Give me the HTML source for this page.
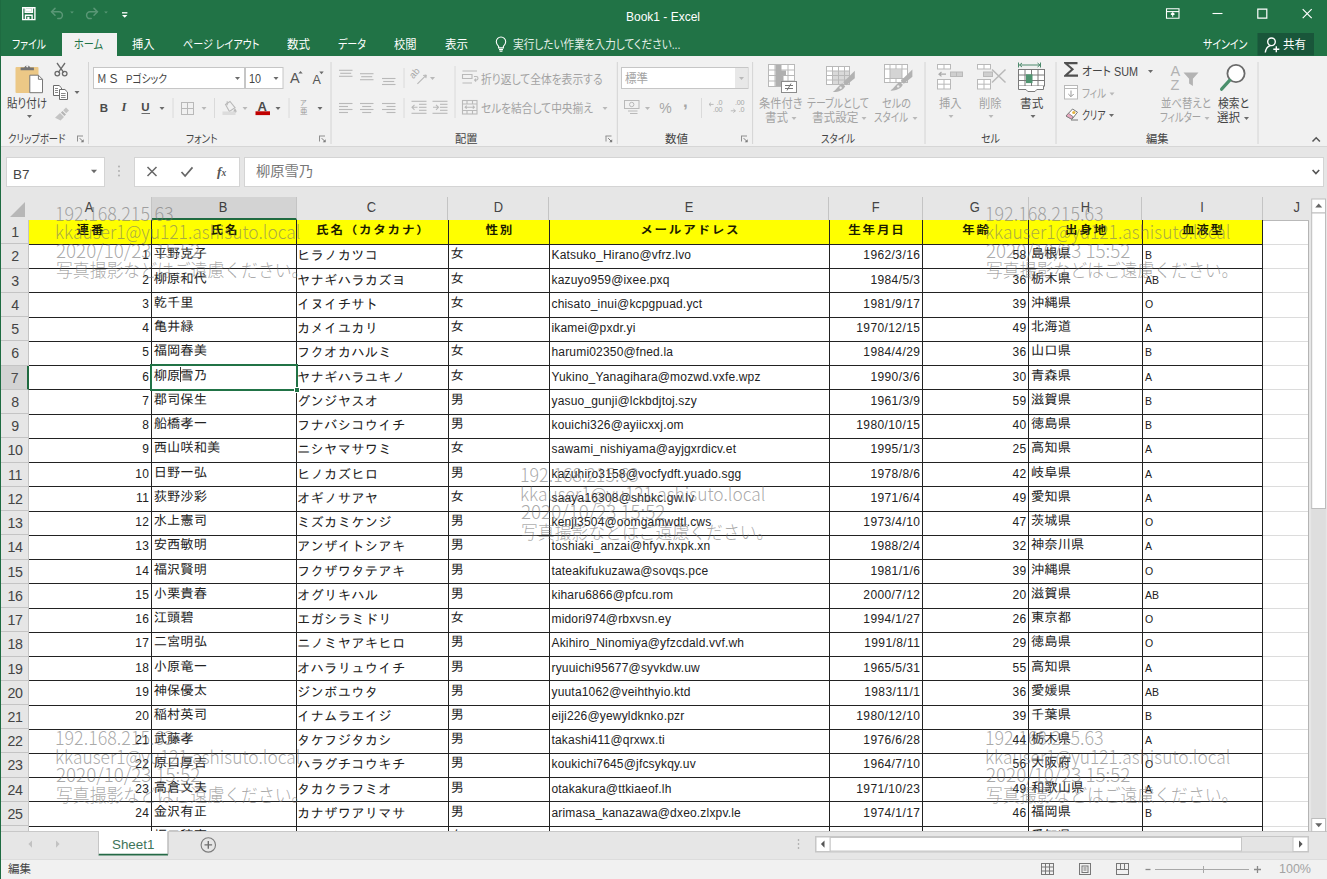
<!DOCTYPE html>
<html lang="ja">
<head>
<meta charset="utf-8">
<title>Book1 - Excel</title>
<style>
html,body{margin:0;padding:0;}
body{width:1327px;height:879px;overflow:hidden;position:relative;background:#e6e6e6;font-family:"Liberation Sans","Noto Sans CJK JP",sans-serif;font-size:12px;color:#444;}
div,span{box-sizing:border-box;}
.abs{position:absolute;}
#win{position:absolute;left:0;top:0;width:1327px;height:879px;overflow:hidden;background:#e6e6e6;}
#edge{position:absolute;left:0;top:0;width:1px;height:879px;background:#1e6b41;z-index:50;}
#title{position:absolute;left:0;top:0;width:1327px;height:56px;background:#217346;}
#ttl{position:absolute;left:563px;top:9px;width:200px;text-align:center;color:#fff;font-size:12px;line-height:16px;}
.tab{position:absolute;top:33px;height:23px;line-height:23px;color:#fff;font-size:12px;white-space:nowrap;}
#hometab{position:absolute;left:62px;top:33px;width:55px;height:24px;background:#f1f1f1;color:#217346;text-align:center;line-height:23px;font-size:12px;}
#ribbon{position:absolute;left:0;top:56px;width:1327px;height:91px;background:#f1f1f1;border-bottom:1px solid #d6d6d6;}
.gsep{position:absolute;top:63px;width:1px;height:79px;background:#d8d8d8;}
.glabel{position:absolute;top:129px;height:16px;line-height:16px;font-size:11.5px;color:#555;white-space:nowrap;}
.rt{position:absolute;font-size:11.5px;line-height:14px;white-space:nowrap;color:#444;font-feature-settings:"palt";transform-origin:0 50%;z-index:8;}
.dis{color:#a6a6a6;}
/* formula bar */
#namebox{position:absolute;left:6px;top:157px;width:99px;height:30px;background:#fff;border:1px solid #d4d4d4;}
#fxbox{position:absolute;left:134px;top:157px;width:105.5px;height:30px;background:#fff;border:1px solid #d4d4d4;}
#fbar{position:absolute;left:243.5px;top:157px;width:1080.5px;height:30px;background:#fff;border:1px solid #d4d4d4;}
/* grid */
#sheet{position:absolute;left:28.5px;top:220.2px;width:1280px;height:611.4px;background:#fff;border-right:1px solid #b4b4b4;}
.ch{position:absolute;top:196.5px;height:23.7px;line-height:20.5px;text-align:center;font-size:15px;color:#444;border-right:1px solid #c4c4c4;}
.ch.sel{background:#d3d3d3;color:#3e3e3e;border-bottom:2px solid #1f6a40;}
.ch span{display:inline-block;transform:scaleX(0.86);}
.rh{position:absolute;left:1px;width:27.5px;padding-left:1.5px;height:24.24px;line-height:25px;text-align:center;font-size:14.2px;letter-spacing:-0.4px;color:#444;border-bottom:1px solid #c4c4c4;background:#e6e6e6;border-right:1px solid #c4c4c4;}
.rh.sel{background:#d3d3d3;color:#4a4a4a;border-right:2px solid #1f6a40;}
.hd{position:absolute;height:24.24px;line-height:21.5px;background:#ffff00;text-align:center;font-family:"Liberation Sans","Noto Sans CJK JP",sans-serif;font-weight:bold;font-size:12.5px;color:#1c1c00;white-space:nowrap;letter-spacing:1.8px;padding-left:1.8px;}
.hd span{display:inline-block;transform:scaleY(0.88);}
.c{position:absolute;height:24.24px;line-height:19.8px;white-space:nowrap;overflow:hidden;color:#222;}
.c.j{font-family:"IPAGothic","Noto Sans CJK JP",sans-serif;font-size:13.33px;padding-left:2.2px;}
.c.n,.c.d{text-align:right;padding-right:2.2px;font-size:12px;letter-spacing:0.4px;line-height:22.2px;}
.c.e{padding-left:2.2px;font-size:12px;letter-spacing:0.18px;line-height:22.8px;}
.c.b{padding-left:2.6px;font-size:10.5px;line-height:22.8px;}
.c.k{font-family:"IPAGothic","Noto Sans CJK JP",sans-serif;font-size:13.33px;padding-left:0.4px;letter-spacing:0.25px;line-height:22.2px;}
.hl{position:absolute;left:28.5px;width:1234px;height:1px;background:#222;}
.vl{position:absolute;top:220.2px;width:1px;height:611.3px;background:#222;}
.gl{position:absolute;height:1px;background:#dcdcdc;}
#hdline{position:absolute;left:1px;top:219.5px;width:1307.5px;height:1px;background:#b9b9b9;}
#clipgrid{position:absolute;left:0;top:0;width:1327px;height:831.3px;overflow:hidden;}
.selbox{position:absolute;border:2px solid #217346;z-index:20;}
.fillh{position:absolute;width:6px;height:6px;background:#217346;border:1px solid #fff;z-index:21;}
.caret{position:absolute;width:1px;height:15px;background:#333;z-index:21;}
#corner{position:absolute;left:9.5px;top:201.5px;width:0;height:0;border-left:15px solid transparent;border-bottom:15px solid #b7b7b7;}
/* bottom */
#tabbar{position:absolute;left:0;top:831.3px;width:1327px;height:28px;background:#e6e6e6;border-top:1px solid #c8c8c8;}
#status{position:absolute;left:0;top:859px;width:1327px;height:20px;background:#f1f1f1;border-top:1px solid #dcdcdc;}
.wm{position:absolute;font-family:"Noto Sans CJK JP",sans-serif;font-weight:300;font-size:18.6px;line-height:20px;color:rgba(112,112,112,0.6);white-space:nowrap;z-index:40;transform-origin:0 0;}
</style>
</head>
<body>
<div id="win">
<div id="title"></div>
<div id="ttl">Book1 - Excel</div>
<div id="hometab"></div>
<div class="rt" style="left:12px;top:37px;font-size:12px;line-height:16px;transform:scaleX(0.818);color:#fff;">ファイル</div>
<div class="rt" style="left:74px;top:37px;font-size:12px;line-height:16px;transform:scaleX(0.844);color:#217346;">ホーム</div>
<div class="rt" style="left:132px;top:37px;font-size:12px;line-height:16px;transform:scaleX(0.937);color:#fff;">挿入</div>
<div class="rt" style="left:183px;top:37px;font-size:12px;line-height:16px;transform:scaleX(0.838);color:#fff;">ページ レイアウト</div>
<div class="rt" style="left:287px;top:37px;font-size:12px;line-height:16px;transform:scaleX(0.958);color:#fff;">数式</div>
<div class="rt" style="left:338px;top:37px;font-size:12px;line-height:16px;transform:scaleX(0.835);color:#fff;">データ</div>
<div class="rt" style="left:394px;top:37px;font-size:12px;line-height:16px;transform:scaleX(0.937);color:#fff;">校閲</div>
<div class="rt" style="left:445px;top:37px;font-size:12px;line-height:16px;transform:scaleX(0.958);color:#fff;">表示</div>
<div class="rt" style="left:512.5px;top:37px;font-size:12px;line-height:16px;transform:scaleX(0.887);color:#e3efe8;">実行したい作業を入力してください...</div>
<div class="rt" style="left:1203px;top:37px;font-size:12px;line-height:16px;transform:scaleX(0.827);color:#fff;">サインイン</div>
<div class="rt" style="left:1283px;top:37px;font-size:12px;line-height:16px;transform:scaleX(0.958);color:#fff;">共有</div>
<div id="ribbon"></div>
<svg class="abs" style="left:0;top:0;z-index:5" width="1327" height="195" viewBox="0 0 1327 195" fill="none">
<g stroke="#fff" stroke-width="1.4" fill="none"><path d="M22.700 7.800h12.200v11.800h-12.200z"/><path d="M25.200 8v4.200h7.200v-4.200" /><path d="M25.500 19.400v-4.200h6.600v4.200"/></g><rect x="25.900" y="8.400" width="5.800" height="3.300" fill="#fff"/><rect x="27.300" y="16.800" width="2.200" height="2.600" fill="#fff"/>
<g stroke="#5a9776" stroke-width="1.500" fill="none" stroke-linecap="round"><path d="M52 11.800h7a3.400 3.400 0 0 1 0 6.800h-1.200"/><path d="M55 8.400l-3.400 3.400 3.400 3.400"/></g>
<g stroke="#5a9776" stroke-width="1.500" fill="none" stroke-linecap="round"><path d="M97 11.800h-7a3.400 3.400 0 0 0 0 6.800h1.200"/><path d="M94 8.400l3.400 3.400-3.400 3.400"/></g>
<path d="M70.2 11.4h3.6l-1.8 2.2z" fill="#5a9776"/>
<path d="M104.2 11.4h3.6l-1.8 2.2z" fill="#5a9776"/>
<path d="M122 12.800h5.400" stroke="#fff" stroke-width="1.300"/><path d="M122 15l5.400 0l-2.700 2.800z" fill="#fff"/>
<g transform="translate(-0.5 -0.7)"><g stroke="#fff" stroke-width="1.1" fill="none"><path d="M1167 9.5h12.5v9.5h-12.5z"/><path d="M1167 12.3h12.5"/><path d="M1173.2 17.5v-3.8M1171.4 15.2l1.8-1.8 1.8 1.8"/></g>
<path d="M1213 14.2h10" stroke="#fff" stroke-width="1.1"/>
<path d="M1258.3 9.8h9v9h-9z" stroke="#fff" stroke-width="1.2"/>
<path d="M1303.2 9.800l9 9M1312.200 9.800l-9 9" stroke="#fff" stroke-width="1.200"/></g>
<rect x="1257.5" y="33" width="56.5" height="22.5" fill="#19563a"/>
<g stroke="#fff" stroke-width="1.4" fill="none"><circle cx="1271.5" cy="41.8" r="3.8"/><path d="M1265.3 52.5c0.6-4.2 2.8-6.4 5.2-6.9"/><path d="M1276.3 46.2v6M1273.3 49.2h6"/></g>
<g stroke="#fff" stroke-width="1.1" fill="none"><path d="M498.6 46.3c-1.4-1.4-2.3-2.6-2.3-4.6a4.7 4.7 0 0 1 9.4 0c0 2-0.9 3.2-2.3 4.6v1.6h-4.8z"/><path d="M499 49.6h4M499.6 51.3h2.8"/></g>
<rect x="15.5" y="67" width="23" height="26" rx="1" fill="#ecc886"/>
<path d="M20.600 70.300h13.300v-2.800h-3.600a3.300 3.300 0 0 0-6.100 0h-3.600z" fill="#737373"/><circle cx="27.250" cy="66.300" r="1.100" fill="#f1f1f1"/>
<path d="M29.8 75.2h8.6l4.1 4.1v13.4h-12.7z" fill="#fff" stroke="#777" stroke-width="1"/><path d="M38.4 75.2v4.1h4.1" stroke="#777" stroke-width="1" fill="none"/>
<path d="M27.0 115.0h5l-2.5 3z" fill="#6b6b6b"/>
<g stroke="#6b6b6b" stroke-width="1.3" fill="none"><path d="M57 63l6.8 9.6M65 63l-6.8 9.6"/><circle cx="57.3" cy="73.6" r="2.3"/><circle cx="64.7" cy="73.6" r="2.3"/></g>
<g stroke="#6b6b6b" stroke-width="1" fill="#fff"><path d="M53.5 85.5h5.6l2.4 2.4v7.6h-8z"/><path d="M59.5 89.5h5.4l2.6 2.6v7.4h-8z"/></g><path d="M55 88.5h3M55 90.5h3M55 92.5h3M61 93.5h4.6M61 95.5h4.6M61 97.5h4.6" stroke="#6b6b6b" stroke-width="0.8"/>
<path d="M74.5 91.0h5l-2.5 3z" fill="#6b6b6b"/>
<g fill="#c4c4c4"><path d="M66 107.5l3 3-2.8 2.8-3-3z"/><path d="M62.5 111l3.5 3.5-1.6 1.6-3.5-3.5z" fill="#b5b5b5"/><path d="M60 113l4 4-3.4 3.4-5.6-2.6z"/></g>
<path d="M77.5 136v5.500M77.0 136h6" stroke="#8f8f8f" stroke-width="1" fill="none"/>
<path d="M83.7 139.2v3h-3z" fill="#7a7a7a"/><path d="M79.7 138.2l3 3" stroke="#7a7a7a" stroke-width="1"/>
<rect x="93.5" y="67.5" width="151" height="21" fill="#fff" stroke="#c6c6c6"/>
<rect x="245.5" y="67.5" width="37.5" height="21" fill="#fff" stroke="#c6c6c6"/>
<path d="M235.0 77.0h5l-2.5 3z" fill="#6b6b6b"/>
<path d="M273.5 77.0h5l-2.5 3z" fill="#6b6b6b"/>
<path d="M319.5 136v5.500M319.0 136h6" stroke="#8f8f8f" stroke-width="1" fill="none"/>
<path d="M325.7 139.2v3h-3z" fill="#7a7a7a"/><path d="M321.7 138.2l3 3" stroke="#7a7a7a" stroke-width="1"/>
<path d="M300.5 71l2.2 2.6h-4.4z" fill="#6b6b6b"/><path d="M321.5 74.2l2.2-2.6h-4.4z" fill="#6b6b6b"/>
<path d="M141.5 113.5h8.5" stroke="#6b6b6b" stroke-width="1"/>
<path d="M159.5 107.0h5l-2.5 3z" fill="#6b6b6b"/>
<g stroke="#b9b9b9" stroke-width="1" fill="none"><rect x="181.5" y="102.5" width="12" height="12"/><path d="M187.5 102.5v12M181.5 108.5h12"/></g>
<path d="M201.5 107.0h5l-2.5 3z" fill="#b9b9b9"/>
<g stroke="#b9b9b9" stroke-width="1.1" fill="none"><path d="M225.5 104.5l4.5-3 5 6.2-5.6 3.8z"/><path d="M227.2 101.2v4"/></g><path d="M235 108.2c1 1.4 1.5 2.2 1.5 3a1.5 1.5 0 0 1-3 0c0-0.8 0.5-1.6 1.5-3z" fill="#b9b9b9"/><rect x="222.5" y="111.5" width="13" height="3.5" fill="#dcdcdc"/>
<path d="M242.5 107.0h5l-2.5 3z" fill="#b9b9b9"/>
<rect x="255.5" y="111.3" width="14.5" height="3.8" fill="#c00000"/>
<path d="M275.5 107.0h5l-2.5 3z" fill="#6b6b6b"/>
<path d="M317.5 107.0h5l-2.5 3z" fill="#6b6b6b"/>
<path d="M173 98v20" stroke="#dadada" stroke-width="1"/>
<path d="M214.5 98v20" stroke="#dadada" stroke-width="1"/>
<path d="M289 98v20" stroke="#dadada" stroke-width="1"/>
<path d="M339 70.3h13.5" stroke="#b9b9b9" stroke-width="1.1"/>
<path d="M340.2 73.3h11" stroke="#b9b9b9" stroke-width="1.1"/>
<path d="M339 76.3h13.5" stroke="#b9b9b9" stroke-width="1.1"/>
<path d="M360 73.7h13.5" stroke="#b9b9b9" stroke-width="1.1"/>
<path d="M361.2 76.7h11" stroke="#b9b9b9" stroke-width="1.1"/>
<path d="M360 79.7h13.5" stroke="#b9b9b9" stroke-width="1.1"/>
<path d="M382 78.5h13.5" stroke="#b9b9b9" stroke-width="1.1"/>
<path d="M383.2 81.5h11" stroke="#b9b9b9" stroke-width="1.1"/>
<path d="M382 84.5h13.5" stroke="#b9b9b9" stroke-width="1.1"/>
<text x="0" y="0" transform="translate(413.2 79.2) rotate(-48)" font-family="Liberation Sans, sans-serif" font-size="9.5" fill="#a9a9a9">ab</text>
<path d="M417.4 83.9l8.6-8.6M426.3 75l-3.2 0.5M426.3 75l-0.500 3.200" stroke="#b9b9b9" stroke-width="1.2" fill="none"/>
<path d="M430.0 77.0h5l-2.5 3z" fill="#b9b9b9"/>
<path d="M339 103.5h13.5" stroke="#b9b9b9" stroke-width="1.1"/>
<path d="M339 106.5h9" stroke="#b9b9b9" stroke-width="1.1"/>
<path d="M339 109.5h13.5" stroke="#b9b9b9" stroke-width="1.1"/>
<path d="M339 112.5h9" stroke="#b9b9b9" stroke-width="1.1"/>
<path d="M360 103.5h13.5" stroke="#b9b9b9" stroke-width="1.1"/>
<path d="M362.2 106.5h9" stroke="#b9b9b9" stroke-width="1.1"/>
<path d="M360 109.5h13.5" stroke="#b9b9b9" stroke-width="1.1"/>
<path d="M362.2 112.5h9" stroke="#b9b9b9" stroke-width="1.1"/>
<path d="M382 103.5h13.5" stroke="#b9b9b9" stroke-width="1.1"/>
<path d="M386.5 106.5h9" stroke="#b9b9b9" stroke-width="1.1"/>
<path d="M382 109.5h13.5" stroke="#b9b9b9" stroke-width="1.1"/>
<path d="M386.5 112.5h9" stroke="#b9b9b9" stroke-width="1.1"/>
<path d="M411.5 101.3h15" stroke="#b9b9b9" stroke-width="1.1"/>
<path d="M419 104.3h7.5" stroke="#b9b9b9" stroke-width="1.1"/>
<path d="M419 107.3h7.5" stroke="#b9b9b9" stroke-width="1.1"/>
<path d="M419 110.3h7.5" stroke="#b9b9b9" stroke-width="1.1"/>
<path d="M411.5 113.3h15" stroke="#b9b9b9" stroke-width="1.1"/>
<path d="M412 107.300h5.500M414.500 104.800l-2.500 2.500 2.500 2.500" stroke="#b9b9b9" stroke-width="1.1"/>
<path d="M432.5 101.3h15" stroke="#b9b9b9" stroke-width="1.1"/>
<path d="M440 104.3h7.5" stroke="#b9b9b9" stroke-width="1.1"/>
<path d="M440 107.3h7.5" stroke="#b9b9b9" stroke-width="1.1"/>
<path d="M440 110.3h7.5" stroke="#b9b9b9" stroke-width="1.1"/>
<path d="M432.5 113.3h15" stroke="#b9b9b9" stroke-width="1.1"/>
<path d="M433 107.300h5.500M436 104.800l2.500 2.500-2.500 2.500" stroke="#b9b9b9" stroke-width="1.1"/>
<path d="M404 68v20M404 98v20" stroke="#dadada" stroke-width="1"/>
<path d="M455 66v52" stroke="#dadada" stroke-width="1"/>
<g stroke="#b9b9b9" stroke-width="1.1" fill="none"><path d="M462.5 71h14.5M462.5 74.5h9.5v4h-9.5zM462.5 83h9.5"/><path d="M474 76.5h2.2a1.8 1.8 0 0 1 0 3.6h-1.2M476 78.6l-1.4 1.5 1.4 1.5"/></g>
<g stroke="#b9b9b9" stroke-width="1.1" fill="none"><rect x="462.5" y="100.5" width="14.5" height="13.5"/><path d="M462.5 104h14.5M462.5 110.5h14.5M467 100.5v3.5M472.5 100.5v3.5M467 110.5v3.5M472.5 110.5v3.5"/><path d="M465 107.2h9.5M466.7 105.7l-1.6 1.5 1.6 1.5M472.8 105.7l1.6 1.5-1.6 1.5"/></g>
<path d="M602.5 107.0h5l-2.5 3z" fill="#b9b9b9"/>
<path d="M606 136v5.500M605.5 136h6" stroke="#8f8f8f" stroke-width="1" fill="none"/>
<path d="M612.2 139.2v3h-3z" fill="#7a7a7a"/><path d="M608.2 138.2l3 3" stroke="#7a7a7a" stroke-width="1"/>
<rect x="621.5" y="67.5" width="126.5" height="21" fill="#fff" stroke="#c6c6c6"/><rect x="735" y="68" width="12.5" height="20" fill="#e8e8e8"/>
<path d="M739.0 77.0h5l-2.5 3z" fill="#b9b9b9"/>
<g stroke="#b9b9b9" stroke-width="1" fill="none"><rect x="624.5" y="100.500" width="14.500" height="8"/><circle cx="631.700" cy="104.500" r="2.200"/><path d="M628 111h9.500M630 113.500h7.500"/></g>
<path d="M709 104.400h4.600M711 102.600l-2 1.800 2 1.800" stroke="#b9b9b9" stroke-width="1" fill="none"/><path d="M730.800 110.800h4.600M733.400 109l2 1.800-2 1.800" stroke="#b9b9b9" stroke-width="1" fill="none"/>
<path d="M645.0 107.0h5l-2.5 3z" fill="#b9b9b9"/>
<path d="M701.5 98v20" stroke="#dadada" stroke-width="1"/>
<path d="M741.5 136v5.500M741.0 136h6" stroke="#8f8f8f" stroke-width="1" fill="none"/>
<path d="M747.7 139.2v3h-3z" fill="#7a7a7a"/><path d="M743.7 138.2l3 3" stroke="#7a7a7a" stroke-width="1"/>
<g stroke="#b9b9b9" stroke-width="1" fill="#fff"><rect x="768.5" y="64.5" width="26" height="22"/><path d="M768.5 70h26M768.5 75.5h26M768.5 81h26M775 64.5v22M788 64.5v22"/></g><rect x="775.500" y="65" width="6" height="21" fill="#b0b0b0"/><rect x="781" y="70.500" width="5" height="5" fill="#b0b0b0"/><rect x="781" y="76" width="2.500" height="5" fill="#b0b0b0"/><rect x="781.5" y="81.5" width="15" height="11" fill="#fff" stroke="#8c8c8c"/><path d="M785 85.5h8M785 88.5h8M791 83.5l-4 7" stroke="#777" stroke-width="1"/>
<g stroke="#b9b9b9" stroke-width="1" fill="#fff"><rect x="826.5" y="66.5" width="23" height="18"/></g><rect x="833" y="71" width="16" height="13" fill="#d9d9d9"/><path d="M826.5 71h23M826.5 75.5h23M826.5 80h23M832.5 66.5v18M838.5 66.5v18M844.5 66.5v18" stroke="#b9b9b9" stroke-width="1"/><g fill="#b2b2b2"><path d="M854.8 70.800V78.200L846.200 85.200L843.200 82.200Z"/><path d="M842.200 83.200L845.200 86.200C843.500 90 838 92.300 832.800 92C836.500 89.500 838.500 85.500 842.200 83.200Z"/></g><circle cx="840.600" cy="87.800" r="1.200" fill="#ececec"/>
<g stroke="#b9b9b9" stroke-width="1" fill="#fff"><rect x="884.5" y="64.5" width="23" height="18"/></g><rect x="890" y="69.5" width="12" height="8.5" fill="#d4d4d4"/><path d="M884.5 69h23M884.5 78.5h23M890 64.5v18M902 64.5v18M896 64.5v4.5M896 78.5v4" stroke="#b9b9b9" stroke-width="1"/><g transform="translate(57.600 -1.400)"><g fill="#b2b2b2"><path d="M854.8 70.800V78.200L846.200 85.200L843.200 82.200Z"/><path d="M842.200 83.200L845.200 86.200C843.500 90 838 92.300 832.800 92C836.500 89.500 838.500 85.500 842.200 83.200Z"/></g><circle cx="840.600" cy="87.800" r="1.200" fill="#ececec"/></g>
<path d="M791.5 117.0h5l-2.5 3z" fill="#b9b9b9"/>
<path d="M861.5 117.0h5l-2.5 3z" fill="#b9b9b9"/>
<path d="M912.5 117.0h5l-2.5 3z" fill="#b9b9b9"/>
<g stroke="#b9b9b9" stroke-width="1" fill="#fff"><rect x="937.5" y="64.5" width="13" height="4.5"/><path d="M944 64.5v4.5"/><rect x="937.5" y="79.5" width="13" height="9.5"/><path d="M937.5 84.2h13M944 79.5v9.5"/><rect x="950.5" y="72" width="12" height="4.5" fill="#cfcfcf"/><path d="M956.5 72v4.5"/><path d="M939 74.2h7M941.5 72l-2.5 2.2 2.5 2.2" fill="none" stroke="#a9a9a9" stroke-width="1.2"/></g>
<path d="M948.5 115.0h5l-2.5 3z" fill="#b9b9b9"/>
<g stroke="#b9b9b9" stroke-width="1" fill="#fff"><rect x="977.5" y="64.5" width="13" height="4.5"/><path d="M984 64.5v4.5"/><rect x="977.5" y="79.5" width="13" height="9.5"/><path d="M977.5 84.2h13M984 79.5v9.5"/><rect x="983.5" y="72" width="9" height="4.5" fill="#cfcfcf"/><path d="M992 69.500l13.500 13M1005.500 69.500l-13.500 13" fill="none" stroke="#b9b9b9" stroke-width="1.500"/></g>
<path d="M988.5 115.0h5l-2.5 3z" fill="#b9b9b9"/>
<g stroke="#7a7a7a" stroke-width="1" fill="#fff"><rect x="1018.5" y="69.5" width="26" height="16.5"/><path d="M1018.5 75h26M1018.5 80.5h26M1025 69.5v16.5M1031.5 69.5v16.5M1038 69.5v16.5"/><path d="M1018.5 86v3.5h7.5l1.8 2h7.2l1.8-2h6.7v-3.5" fill="#fff"/></g><rect x="1026" y="74.300" width="6.500" height="8.800" fill="#4f9470"/><path d="M1018.5 62.5v5M1040.5 62.5v5M1019.5 65h20M1022 63l-2.5 2 2.5 2M1037.5 63l2.5 2-2.5 2" stroke="#4d8a6c" stroke-width="1" fill="none"/>
<path d="M1030.5 115.0h5l-2.5 3z" fill="#6b6b6b"/>
<path d="M1077.500 62h-13.500v1.300l7 6-7 6.200v1.300h14v-2.300h-9.800l5.900-5.300-5.900-5h9.300z" fill="#505050"/>
<path d="M1148.0 70.0h5l-2.5 3z" fill="#6b6b6b"/>
<g stroke="#b9b9b9" stroke-width="1" fill="#fff"><rect x="1064.5" y="85.5" width="13" height="13.5"/><path d="M1064.5 88.5h13"/><path d="M1071 90.5v6M1068.3 94l2.7 2.7 2.7-2.7" fill="none" stroke="#999"/></g>
<path d="M1109.5 92.5h5l-2.5 3z" fill="#b9b9b9"/>
<g><path d="M1066 116l6.5-7 5 3.2-5.5 7z" fill="#fff" stroke="#777" stroke-width="1"/><path d="M1066 116l2.5-2.7 4.6 3.4-1.6 2.5z" fill="#e9a9c0" stroke="#777" stroke-width="0.8"/><path d="M1071 120h7" stroke="#777" stroke-width="1"/><circle cx="1073.8" cy="112.5" r="1.6" fill="#e3b341"/></g>
<path d="M1109.0 114.0h5l-2.5 3z" fill="#6b6b6b"/>
<path d="M1183.5 72.5h15l-5.6 6.2v7.3l-3.8-2.4v-4.9z" fill="#b3b3b3"/>
<path d="M1204.5 117.0h5l-2.5 3z" fill="#b9b9b9"/>
<circle cx="1236" cy="73.5" r="8.6" fill="#fff" stroke="#6b6b6b" stroke-width="1.8"/><path d="M1229.8 80.2l-8.2 9" stroke="#4a8f6c" stroke-width="3.200" stroke-linecap="round"/>
<path d="M1244.0 117.0h5l-2.5 3z" fill="#6b6b6b"/>
<path d="M1312.5 141.5l3.7-3.7 3.7 3.7" stroke="#555" stroke-width="1.5" fill="none"/>
<path d="M88.5 62v82" stroke="#d4d4d4" stroke-width="1"/>
<path d="M331 62v82" stroke="#d4d4d4" stroke-width="1"/>
<path d="M617.3 62v82" stroke="#d4d4d4" stroke-width="1"/>
<path d="M752.6 62v82" stroke="#d4d4d4" stroke-width="1"/>
<path d="M925 62v82" stroke="#d4d4d4" stroke-width="1"/>
<path d="M1056 62v82" stroke="#d4d4d4" stroke-width="1"/>
<path d="M1258 62v82" stroke="#d4d4d4" stroke-width="1"/>
<path d="M91.0 169.75h6l-3.0 3.5z" fill="#6b6b6b"/>
<circle cx="119" cy="166.5" r="0.9" fill="#aaa"/><circle cx="119" cy="171" r="0.9" fill="#aaa"/><circle cx="119" cy="175.5" r="0.9" fill="#aaa"/>
<path d="M147.5 167l9 9M156.5 167l-9 9" stroke="#666" stroke-width="1.5"/>
<path d="M181.5 172l3.6 4 7.4-8.6" stroke="#666" stroke-width="1.7" fill="none"/>
<path d="M1312.6 170l3.3 3.6 3.3-3.6" stroke="#555" stroke-width="1.6" fill="none"/>
</svg>
<div class="rt" style="left:7px;top:95.5px;font-size:12px;line-height:16px;transform:scaleX(0.875);">貼り付け</div>
<div class="rt" style="left:8px;top:131px;font-size:11.5px;line-height:16px;transform:scaleX(0.811);">クリップボード</div>
<div class="rt" style="left:96.7px;top:70.5px;font-size:11.5px;line-height:16px;transform:scaleX(0.843);">Ｍ</div>
<div class="rt" style="left:108.8px;top:70.5px;font-size:11.5px;line-height:16px;transform:scaleX(1.045);">Ｓ</div>
<div class="rt" style="left:126px;top:70.5px;font-size:11.5px;line-height:16px;transform:scaleX(0.846);">Pゴシック</div>
<div class="rt" style="left:249px;top:70.5px;font-size:12px;line-height:16px;transform:scaleX(0.898);">10</div>
<div class="rt" style="left:186px;top:131px;font-size:11.5px;line-height:16px;transform:scaleX(0.837);">フォント</div>
<div class="rt" style="left:481px;top:71.5px;font-size:12px;line-height:16px;transform:scaleX(0.897);color:#a3a3a3;">折り返して全体を表示する</div>
<div class="rt" style="left:481px;top:100.5px;font-size:12px;line-height:16px;transform:scaleX(0.893);color:#a3a3a3;">セルを結合して中央揃え</div>
<div class="rt" style="left:454.5px;top:131px;font-size:11.5px;line-height:16px;transform:scaleX(0.978);">配置</div>
<div class="rt" style="left:624.5px;top:70.5px;font-size:12px;line-height:16px;transform:scaleX(0.958);color:#a3a3a3;">標準</div>
<div class="rt" style="left:665px;top:131px;font-size:11.5px;line-height:16px;transform:scaleX(1.000);">数値</div>
<div class="rt" style="left:758.5px;top:96px;font-size:12px;line-height:16px;transform:scaleX(0.935);color:#a3a3a3;">条件付き</div>
<div class="rt" style="left:765px;top:110px;font-size:12px;line-height:16px;transform:scaleX(0.958);color:#a3a3a3;">書式</div>
<div class="rt" style="left:807px;top:96px;font-size:12px;line-height:16px;transform:scaleX(0.825);color:#a3a3a3;">テーブルとして</div>
<div class="rt" style="left:811.5px;top:110px;font-size:12px;line-height:16px;transform:scaleX(0.968);color:#a3a3a3;">書式設定</div>
<div class="rt" style="left:882px;top:96px;font-size:12px;line-height:16px;transform:scaleX(0.847);color:#a3a3a3;">セルの</div>
<div class="rt" style="left:874px;top:110px;font-size:12px;line-height:16px;transform:scaleX(0.789);color:#a3a3a3;">スタイル</div>
<div class="rt" style="left:821px;top:131px;font-size:11.5px;line-height:16px;transform:scaleX(0.823);">スタイル</div>
<div class="rt" style="left:938.5px;top:96px;font-size:12px;line-height:16px;transform:scaleX(0.937);color:#a3a3a3;">挿入</div>
<div class="rt" style="left:978.5px;top:96px;font-size:12px;line-height:16px;transform:scaleX(0.937);color:#a3a3a3;">削除</div>
<div class="rt" style="left:1019.7px;top:96px;font-size:12px;line-height:16px;transform:scaleX(0.970);">書式</div>
<div class="rt" style="left:981px;top:131px;font-size:11.5px;line-height:16px;transform:scaleX(0.875);">セル</div>
<div class="rt" style="left:1082px;top:63.5px;font-size:12px;line-height:16px;transform:scaleX(0.901);">オート SUM</div>
<div class="rt" style="left:1082px;top:86px;font-size:12px;line-height:16px;transform:scaleX(0.793);color:#a3a3a3;">フィル</div>
<div class="rt" style="left:1082px;top:107.5px;font-size:12px;line-height:16px;transform:scaleX(0.739);">クリア</div>
<div class="rt" style="left:1160.5px;top:96px;font-size:12px;line-height:16px;transform:scaleX(0.867);color:#a3a3a3;">並べ替えと</div>
<div class="rt" style="left:1160px;top:110px;font-size:12px;line-height:16px;transform:scaleX(0.780);color:#a3a3a3;">フィルター</div>
<div class="rt" style="left:1218px;top:96px;font-size:12px;line-height:16px;transform:scaleX(0.897);">検索と</div>
<div class="rt" style="left:1217px;top:110px;font-size:12px;line-height:16px;transform:scaleX(0.958);">選択</div>
<div class="rt" style="left:1145.5px;top:131px;font-size:11.5px;line-height:16px;transform:scaleX(0.978);">編集</div>
<div class="rt" style="left:290px;top:70px;font-size:14.5px;line-height:16px;color:#555;">A</div>
<div class="rt" style="left:312.5px;top:72px;font-size:12.5px;line-height:16px;color:#555;">A</div>
<div class="rt" style="left:99.8px;top:99.5px;font-size:11.5px;line-height:16px;font-weight:bold;color:#4a4a4a;">B</div>
<div class="rt" style="left:121.5px;top:99px;font-size:12.5px;line-height:16px;font-style:italic;font-weight:bold;font-family:'Liberation Serif',serif;color:#4a4a4a;">I</div>
<div class="rt" style="left:141.3px;top:99px;font-size:11.5px;line-height:16px;font-weight:bold;color:#4a4a4a;">U</div>
<div class="rt" style="left:257.5px;top:98.5px;font-size:13px;line-height:16px;font-weight:bold;color:#4a4a4a;">A</div>
<div class="rt" style="left:300px;top:99px;font-size:7px;line-height:8px;color:#9a9a9a;">ア</div>
<div class="rt" style="left:300px;top:107.5px;font-size:7.5px;line-height:8px;color:#9a9a9a;">亜</div>
<div class="rt" style="left:659.2px;top:99.5px;font-size:14px;line-height:16px;color:#a6a6a6;">%</div>
<div class="rt" style="left:683px;top:93.5px;font-size:17px;line-height:16px;font-weight:bold;color:#a6a6a6;">,</div>
<div class="rt" style="left:1170.5px;top:63.5px;font-size:14.5px;line-height:14px;color:#b3b3b3;">A<br>Z</div>
<div class="rt" style="left:217px;top:163.5px;font-size:13.5px;line-height:16px;font-style:italic;font-weight:bold;font-family:'Liberation Serif',serif;color:#555;">f<span style="font-size:9.5px;">x</span></div>
<div class="rt" style="left:702px;width:20.3px;text-align:right;top:100.2px;font-size:7.2px;line-height:6.6px;color:#a6a6a6;letter-spacing:-0.2px;">.0<br>.00</div>
<div class="rt" style="left:724px;width:20.3px;text-align:right;top:100.2px;font-size:7.2px;line-height:6.6px;color:#a6a6a6;letter-spacing:-0.2px;">.00<br>.0</div>

<div id="namebox"></div><div id="fxbox"></div><div id="fbar"></div>
<div class="rt" style="left:13px;top:166.5px;font-size:13.5px;line-height:16px;transform:scaleX(0.999);">B7</div>
<div class="rt" style="left:256px;top:164px;font-size:13.5px;line-height:16px;transform:scaleX(1.056);color:#777;">柳原雪乃</div>
<div id="clipgrid">
<div id="sheet"></div><div id="corner"></div><div id="hdline"></div>
<div class="ch" style="left:28.5px;width:123.0px"><span>A</span></div>
<div class="ch sel" style="left:151.5px;width:145.0px"><span>B</span></div>
<div class="ch" style="left:296.5px;width:151.8px"><span>C</span></div>
<div class="ch" style="left:448.3px;width:101.0px"><span>D</span></div>
<div class="ch" style="left:549.3px;width:280.2px"><span>E</span></div>
<div class="ch" style="left:829.5px;width:93.0px"><span>F</span></div>
<div class="ch" style="left:922.5px;width:106.3px"><span>G</span></div>
<div class="ch" style="left:1028.8px;width:113.7px"><span>H</span></div>
<div class="ch" style="left:1142.5px;width:120.0px"><span>I</span></div>
<div class="ch" style="left:1262.5px;width:70px"><span>J</span></div>
<div class="rh" style="top:220.20px">1</div>
<div class="rh" style="top:244.44px">2</div>
<div class="rh" style="top:268.68px">3</div>
<div class="rh" style="top:292.92px">4</div>
<div class="rh" style="top:317.16px">5</div>
<div class="rh" style="top:341.40px">6</div>
<div class="rh sel" style="top:365.64px">7</div>
<div class="rh" style="top:389.88px">8</div>
<div class="rh" style="top:414.12px">9</div>
<div class="rh" style="top:438.36px">10</div>
<div class="rh" style="top:462.60px">11</div>
<div class="rh" style="top:486.84px">12</div>
<div class="rh" style="top:511.08px">13</div>
<div class="rh" style="top:535.32px">14</div>
<div class="rh" style="top:559.56px">15</div>
<div class="rh" style="top:583.80px">16</div>
<div class="rh" style="top:608.04px">17</div>
<div class="rh" style="top:632.28px">18</div>
<div class="rh" style="top:656.52px">19</div>
<div class="rh" style="top:680.76px">20</div>
<div class="rh" style="top:705.00px">21</div>
<div class="rh" style="top:729.24px">22</div>
<div class="rh" style="top:753.48px">23</div>
<div class="rh" style="top:777.72px">24</div>
<div class="rh" style="top:801.96px">25</div>
<div class="rh" style="top:826.20px">26</div>
<div class="hd" style="left:28.5px;width:123.0px;top:220.20px"><span>連番</span></div>
<div class="hd" style="left:151.5px;width:145.0px;top:220.20px"><span>氏名</span></div>
<div class="hd" style="left:296.5px;width:151.8px;top:220.20px"><span>氏名（カタカナ）</span></div>
<div class="hd" style="left:448.3px;width:101.0px;top:220.20px"><span>性別</span></div>
<div class="hd" style="left:549.3px;width:280.2px;top:220.20px"><span>メールアドレス</span></div>
<div class="hd" style="left:829.5px;width:93.0px;top:220.20px"><span>生年月日</span></div>
<div class="hd" style="left:922.5px;width:106.3px;top:220.20px"><span>年齢</span></div>
<div class="hd" style="left:1028.8px;width:113.7px;top:220.20px"><span>出身地</span></div>
<div class="hd" style="left:1142.5px;width:120.0px;top:220.20px"><span>血液型</span></div>
<div class="c n" style="left:28.5px;width:123.0px;top:244.44px">1</div>
<div class="c j" style="left:151.5px;width:145.0px;top:244.44px">平野克子</div>
<div class="c k" style="left:296.5px;width:151.8px;top:244.44px">ヒラノカツコ</div>
<div class="c j" style="left:448.3px;width:101.0px;top:244.44px">女</div>
<div class="c e" style="left:549.3px;width:280.2px;top:244.44px">Katsuko_Hirano@vfrz.lvo</div>
<div class="c d" style="left:829.5px;width:93.0px;top:244.44px">1962/3/16</div>
<div class="c n" style="left:922.5px;width:106.3px;top:244.44px">58</div>
<div class="c j" style="left:1028.8px;width:113.7px;top:244.44px">島根県</div>
<div class="c b" style="left:1142.5px;width:120.0px;top:244.44px">B</div>
<div class="c n" style="left:28.5px;width:123.0px;top:268.68px">2</div>
<div class="c j" style="left:151.5px;width:145.0px;top:268.68px">柳原和代</div>
<div class="c k" style="left:296.5px;width:151.8px;top:268.68px">ヤナギハラカズヨ</div>
<div class="c j" style="left:448.3px;width:101.0px;top:268.68px">女</div>
<div class="c e" style="left:549.3px;width:280.2px;top:268.68px">kazuyo959@ixee.pxq</div>
<div class="c d" style="left:829.5px;width:93.0px;top:268.68px">1984/5/3</div>
<div class="c n" style="left:922.5px;width:106.3px;top:268.68px">36</div>
<div class="c j" style="left:1028.8px;width:113.7px;top:268.68px">栃木県</div>
<div class="c b" style="left:1142.5px;width:120.0px;top:268.68px">AB</div>
<div class="c n" style="left:28.5px;width:123.0px;top:292.92px">3</div>
<div class="c j" style="left:151.5px;width:145.0px;top:292.92px">乾千里</div>
<div class="c k" style="left:296.5px;width:151.8px;top:292.92px">イヌイチサト</div>
<div class="c j" style="left:448.3px;width:101.0px;top:292.92px">女</div>
<div class="c e" style="left:549.3px;width:280.2px;top:292.92px">chisato_inui@kcpgpuad.yct</div>
<div class="c d" style="left:829.5px;width:93.0px;top:292.92px">1981/9/17</div>
<div class="c n" style="left:922.5px;width:106.3px;top:292.92px">39</div>
<div class="c j" style="left:1028.8px;width:113.7px;top:292.92px">沖縄県</div>
<div class="c b" style="left:1142.5px;width:120.0px;top:292.92px">O</div>
<div class="c n" style="left:28.5px;width:123.0px;top:317.16px">4</div>
<div class="c j" style="left:151.5px;width:145.0px;top:317.16px">亀井緑</div>
<div class="c k" style="left:296.5px;width:151.8px;top:317.16px">カメイユカリ</div>
<div class="c j" style="left:448.3px;width:101.0px;top:317.16px">女</div>
<div class="c e" style="left:549.3px;width:280.2px;top:317.16px">ikamei@pxdr.yi</div>
<div class="c d" style="left:829.5px;width:93.0px;top:317.16px">1970/12/15</div>
<div class="c n" style="left:922.5px;width:106.3px;top:317.16px">49</div>
<div class="c j" style="left:1028.8px;width:113.7px;top:317.16px">北海道</div>
<div class="c b" style="left:1142.5px;width:120.0px;top:317.16px">A</div>
<div class="c n" style="left:28.5px;width:123.0px;top:341.40px">5</div>
<div class="c j" style="left:151.5px;width:145.0px;top:341.40px">福岡春美</div>
<div class="c k" style="left:296.5px;width:151.8px;top:341.40px">フクオカハルミ</div>
<div class="c j" style="left:448.3px;width:101.0px;top:341.40px">女</div>
<div class="c e" style="left:549.3px;width:280.2px;top:341.40px">harumi02350@fned.la</div>
<div class="c d" style="left:829.5px;width:93.0px;top:341.40px">1984/4/29</div>
<div class="c n" style="left:922.5px;width:106.3px;top:341.40px">36</div>
<div class="c j" style="left:1028.8px;width:113.7px;top:341.40px">山口県</div>
<div class="c b" style="left:1142.5px;width:120.0px;top:341.40px">B</div>
<div class="c n" style="left:28.5px;width:123.0px;top:365.64px">6</div>
<div class="c j" style="left:151.5px;width:145.0px;top:365.64px">柳原雪乃</div>
<div class="c k" style="left:296.5px;width:151.8px;top:365.64px">ヤナギハラユキノ</div>
<div class="c j" style="left:448.3px;width:101.0px;top:365.64px">女</div>
<div class="c e" style="left:549.3px;width:280.2px;top:365.64px">Yukino_Yanagihara@mozwd.vxfe.wpz</div>
<div class="c d" style="left:829.5px;width:93.0px;top:365.64px">1990/3/6</div>
<div class="c n" style="left:922.5px;width:106.3px;top:365.64px">30</div>
<div class="c j" style="left:1028.8px;width:113.7px;top:365.64px">青森県</div>
<div class="c b" style="left:1142.5px;width:120.0px;top:365.64px">A</div>
<div class="c n" style="left:28.5px;width:123.0px;top:389.88px">7</div>
<div class="c j" style="left:151.5px;width:145.0px;top:389.88px">郡司保生</div>
<div class="c k" style="left:296.5px;width:151.8px;top:389.88px">グンジヤスオ</div>
<div class="c j" style="left:448.3px;width:101.0px;top:389.88px">男</div>
<div class="c e" style="left:549.3px;width:280.2px;top:389.88px">yasuo_gunji@lckbdjtoj.szy</div>
<div class="c d" style="left:829.5px;width:93.0px;top:389.88px">1961/3/9</div>
<div class="c n" style="left:922.5px;width:106.3px;top:389.88px">59</div>
<div class="c j" style="left:1028.8px;width:113.7px;top:389.88px">滋賀県</div>
<div class="c b" style="left:1142.5px;width:120.0px;top:389.88px">B</div>
<div class="c n" style="left:28.5px;width:123.0px;top:414.12px">8</div>
<div class="c j" style="left:151.5px;width:145.0px;top:414.12px">船橋孝一</div>
<div class="c k" style="left:296.5px;width:151.8px;top:414.12px">フナバシコウイチ</div>
<div class="c j" style="left:448.3px;width:101.0px;top:414.12px">男</div>
<div class="c e" style="left:549.3px;width:280.2px;top:414.12px">kouichi326@ayiicxxj.om</div>
<div class="c d" style="left:829.5px;width:93.0px;top:414.12px">1980/10/15</div>
<div class="c n" style="left:922.5px;width:106.3px;top:414.12px">40</div>
<div class="c j" style="left:1028.8px;width:113.7px;top:414.12px">徳島県</div>
<div class="c b" style="left:1142.5px;width:120.0px;top:414.12px">B</div>
<div class="c n" style="left:28.5px;width:123.0px;top:438.36px">9</div>
<div class="c j" style="left:151.5px;width:145.0px;top:438.36px">西山咲和美</div>
<div class="c k" style="left:296.5px;width:151.8px;top:438.36px">ニシヤマサワミ</div>
<div class="c j" style="left:448.3px;width:101.0px;top:438.36px">女</div>
<div class="c e" style="left:549.3px;width:280.2px;top:438.36px">sawami_nishiyama@ayjgxrdicv.et</div>
<div class="c d" style="left:829.5px;width:93.0px;top:438.36px">1995/1/3</div>
<div class="c n" style="left:922.5px;width:106.3px;top:438.36px">25</div>
<div class="c j" style="left:1028.8px;width:113.7px;top:438.36px">高知県</div>
<div class="c b" style="left:1142.5px;width:120.0px;top:438.36px">A</div>
<div class="c n" style="left:28.5px;width:123.0px;top:462.60px">10</div>
<div class="c j" style="left:151.5px;width:145.0px;top:462.60px">日野一弘</div>
<div class="c k" style="left:296.5px;width:151.8px;top:462.60px">ヒノカズヒロ</div>
<div class="c j" style="left:448.3px;width:101.0px;top:462.60px">男</div>
<div class="c e" style="left:549.3px;width:280.2px;top:462.60px">kazuhiro3158@vocfydft.yuado.sgg</div>
<div class="c d" style="left:829.5px;width:93.0px;top:462.60px">1978/8/6</div>
<div class="c n" style="left:922.5px;width:106.3px;top:462.60px">42</div>
<div class="c j" style="left:1028.8px;width:113.7px;top:462.60px">岐阜県</div>
<div class="c b" style="left:1142.5px;width:120.0px;top:462.60px">A</div>
<div class="c n" style="left:28.5px;width:123.0px;top:486.84px">11</div>
<div class="c j" style="left:151.5px;width:145.0px;top:486.84px">荻野沙彩</div>
<div class="c k" style="left:296.5px;width:151.8px;top:486.84px">オギノサアヤ</div>
<div class="c j" style="left:448.3px;width:101.0px;top:486.84px">女</div>
<div class="c e" style="left:549.3px;width:280.2px;top:486.84px">saaya16308@shbkc.gw.lv</div>
<div class="c d" style="left:829.5px;width:93.0px;top:486.84px">1971/6/4</div>
<div class="c n" style="left:922.5px;width:106.3px;top:486.84px">49</div>
<div class="c j" style="left:1028.8px;width:113.7px;top:486.84px">愛知県</div>
<div class="c b" style="left:1142.5px;width:120.0px;top:486.84px">A</div>
<div class="c n" style="left:28.5px;width:123.0px;top:511.08px">12</div>
<div class="c j" style="left:151.5px;width:145.0px;top:511.08px">水上憲司</div>
<div class="c k" style="left:296.5px;width:151.8px;top:511.08px">ミズカミケンジ</div>
<div class="c j" style="left:448.3px;width:101.0px;top:511.08px">男</div>
<div class="c e" style="left:549.3px;width:280.2px;top:511.08px">kenji3504@oomgamwdtl.cws</div>
<div class="c d" style="left:829.5px;width:93.0px;top:511.08px">1973/4/10</div>
<div class="c n" style="left:922.5px;width:106.3px;top:511.08px">47</div>
<div class="c j" style="left:1028.8px;width:113.7px;top:511.08px">茨城県</div>
<div class="c b" style="left:1142.5px;width:120.0px;top:511.08px">O</div>
<div class="c n" style="left:28.5px;width:123.0px;top:535.32px">13</div>
<div class="c j" style="left:151.5px;width:145.0px;top:535.32px">安西敏明</div>
<div class="c k" style="left:296.5px;width:151.8px;top:535.32px">アンザイトシアキ</div>
<div class="c j" style="left:448.3px;width:101.0px;top:535.32px">男</div>
<div class="c e" style="left:549.3px;width:280.2px;top:535.32px">toshiaki_anzai@hfyv.hxpk.xn</div>
<div class="c d" style="left:829.5px;width:93.0px;top:535.32px">1988/2/4</div>
<div class="c n" style="left:922.5px;width:106.3px;top:535.32px">32</div>
<div class="c j" style="left:1028.8px;width:113.7px;top:535.32px">神奈川県</div>
<div class="c b" style="left:1142.5px;width:120.0px;top:535.32px">A</div>
<div class="c n" style="left:28.5px;width:123.0px;top:559.56px">14</div>
<div class="c j" style="left:151.5px;width:145.0px;top:559.56px">福沢賢明</div>
<div class="c k" style="left:296.5px;width:151.8px;top:559.56px">フクザワタテアキ</div>
<div class="c j" style="left:448.3px;width:101.0px;top:559.56px">男</div>
<div class="c e" style="left:549.3px;width:280.2px;top:559.56px">tateakifukuzawa@sovqs.pce</div>
<div class="c d" style="left:829.5px;width:93.0px;top:559.56px">1981/1/6</div>
<div class="c n" style="left:922.5px;width:106.3px;top:559.56px">39</div>
<div class="c j" style="left:1028.8px;width:113.7px;top:559.56px">沖縄県</div>
<div class="c b" style="left:1142.5px;width:120.0px;top:559.56px">O</div>
<div class="c n" style="left:28.5px;width:123.0px;top:583.80px">15</div>
<div class="c j" style="left:151.5px;width:145.0px;top:583.80px">小栗貴春</div>
<div class="c k" style="left:296.5px;width:151.8px;top:583.80px">オグリキハル</div>
<div class="c j" style="left:448.3px;width:101.0px;top:583.80px">男</div>
<div class="c e" style="left:549.3px;width:280.2px;top:583.80px">kiharu6866@pfcu.rom</div>
<div class="c d" style="left:829.5px;width:93.0px;top:583.80px">2000/7/12</div>
<div class="c n" style="left:922.5px;width:106.3px;top:583.80px">20</div>
<div class="c j" style="left:1028.8px;width:113.7px;top:583.80px">滋賀県</div>
<div class="c b" style="left:1142.5px;width:120.0px;top:583.80px">AB</div>
<div class="c n" style="left:28.5px;width:123.0px;top:608.04px">16</div>
<div class="c j" style="left:151.5px;width:145.0px;top:608.04px">江頭碧</div>
<div class="c k" style="left:296.5px;width:151.8px;top:608.04px">エガシラミドリ</div>
<div class="c j" style="left:448.3px;width:101.0px;top:608.04px">女</div>
<div class="c e" style="left:549.3px;width:280.2px;top:608.04px">midori974@rbxvsn.ey</div>
<div class="c d" style="left:829.5px;width:93.0px;top:608.04px">1994/1/27</div>
<div class="c n" style="left:922.5px;width:106.3px;top:608.04px">26</div>
<div class="c j" style="left:1028.8px;width:113.7px;top:608.04px">東京都</div>
<div class="c b" style="left:1142.5px;width:120.0px;top:608.04px">O</div>
<div class="c n" style="left:28.5px;width:123.0px;top:632.28px">17</div>
<div class="c j" style="left:151.5px;width:145.0px;top:632.28px">二宮明弘</div>
<div class="c k" style="left:296.5px;width:151.8px;top:632.28px">ニノミヤアキヒロ</div>
<div class="c j" style="left:448.3px;width:101.0px;top:632.28px">男</div>
<div class="c e" style="left:549.3px;width:280.2px;top:632.28px">Akihiro_Ninomiya@yfzcdald.vvf.wh</div>
<div class="c d" style="left:829.5px;width:93.0px;top:632.28px">1991/8/11</div>
<div class="c n" style="left:922.5px;width:106.3px;top:632.28px">29</div>
<div class="c j" style="left:1028.8px;width:113.7px;top:632.28px">徳島県</div>
<div class="c b" style="left:1142.5px;width:120.0px;top:632.28px">O</div>
<div class="c n" style="left:28.5px;width:123.0px;top:656.52px">18</div>
<div class="c j" style="left:151.5px;width:145.0px;top:656.52px">小原竜一</div>
<div class="c k" style="left:296.5px;width:151.8px;top:656.52px">オハラリュウイチ</div>
<div class="c j" style="left:448.3px;width:101.0px;top:656.52px">男</div>
<div class="c e" style="left:549.3px;width:280.2px;top:656.52px">ryuuichi95677@syvkdw.uw</div>
<div class="c d" style="left:829.5px;width:93.0px;top:656.52px">1965/5/31</div>
<div class="c n" style="left:922.5px;width:106.3px;top:656.52px">55</div>
<div class="c j" style="left:1028.8px;width:113.7px;top:656.52px">高知県</div>
<div class="c b" style="left:1142.5px;width:120.0px;top:656.52px">A</div>
<div class="c n" style="left:28.5px;width:123.0px;top:680.76px">19</div>
<div class="c j" style="left:151.5px;width:145.0px;top:680.76px">神保優太</div>
<div class="c k" style="left:296.5px;width:151.8px;top:680.76px">ジンボユウタ</div>
<div class="c j" style="left:448.3px;width:101.0px;top:680.76px">男</div>
<div class="c e" style="left:549.3px;width:280.2px;top:680.76px">yuuta1062@veihthyio.ktd</div>
<div class="c d" style="left:829.5px;width:93.0px;top:680.76px">1983/11/1</div>
<div class="c n" style="left:922.5px;width:106.3px;top:680.76px">36</div>
<div class="c j" style="left:1028.8px;width:113.7px;top:680.76px">愛媛県</div>
<div class="c b" style="left:1142.5px;width:120.0px;top:680.76px">AB</div>
<div class="c n" style="left:28.5px;width:123.0px;top:705.00px">20</div>
<div class="c j" style="left:151.5px;width:145.0px;top:705.00px">稲村英司</div>
<div class="c k" style="left:296.5px;width:151.8px;top:705.00px">イナムラエイジ</div>
<div class="c j" style="left:448.3px;width:101.0px;top:705.00px">男</div>
<div class="c e" style="left:549.3px;width:280.2px;top:705.00px">eiji226@yewyldknko.pzr</div>
<div class="c d" style="left:829.5px;width:93.0px;top:705.00px">1980/12/10</div>
<div class="c n" style="left:922.5px;width:106.3px;top:705.00px">39</div>
<div class="c j" style="left:1028.8px;width:113.7px;top:705.00px">千葉県</div>
<div class="c b" style="left:1142.5px;width:120.0px;top:705.00px">B</div>
<div class="c n" style="left:28.5px;width:123.0px;top:729.24px">21</div>
<div class="c j" style="left:151.5px;width:145.0px;top:729.24px">武藤孝</div>
<div class="c k" style="left:296.5px;width:151.8px;top:729.24px">タケフジタカシ</div>
<div class="c j" style="left:448.3px;width:101.0px;top:729.24px">男</div>
<div class="c e" style="left:549.3px;width:280.2px;top:729.24px">takashi411@qrxwx.ti</div>
<div class="c d" style="left:829.5px;width:93.0px;top:729.24px">1976/6/28</div>
<div class="c n" style="left:922.5px;width:106.3px;top:729.24px">44</div>
<div class="c j" style="left:1028.8px;width:113.7px;top:729.24px">栃木県</div>
<div class="c b" style="left:1142.5px;width:120.0px;top:729.24px">A</div>
<div class="c n" style="left:28.5px;width:123.0px;top:753.48px">22</div>
<div class="c j" style="left:151.5px;width:145.0px;top:753.48px">原口厚吉</div>
<div class="c k" style="left:296.5px;width:151.8px;top:753.48px">ハラグチコウキチ</div>
<div class="c j" style="left:448.3px;width:101.0px;top:753.48px">男</div>
<div class="c e" style="left:549.3px;width:280.2px;top:753.48px">koukichi7645@jfcsykqy.uv</div>
<div class="c d" style="left:829.5px;width:93.0px;top:753.48px">1964/7/10</div>
<div class="c n" style="left:922.5px;width:106.3px;top:753.48px">56</div>
<div class="c j" style="left:1028.8px;width:113.7px;top:753.48px">大阪府</div>
<div class="c b" style="left:1142.5px;width:120.0px;top:753.48px">O</div>
<div class="c n" style="left:28.5px;width:123.0px;top:777.72px">23</div>
<div class="c j" style="left:151.5px;width:145.0px;top:777.72px">高倉文夫</div>
<div class="c k" style="left:296.5px;width:151.8px;top:777.72px">タカクラフミオ</div>
<div class="c j" style="left:448.3px;width:101.0px;top:777.72px">男</div>
<div class="c e" style="left:549.3px;width:280.2px;top:777.72px">otakakura@ttkiaeof.lh</div>
<div class="c d" style="left:829.5px;width:93.0px;top:777.72px">1971/10/23</div>
<div class="c n" style="left:922.5px;width:106.3px;top:777.72px">49</div>
<div class="c j" style="left:1028.8px;width:113.7px;top:777.72px">和歌山県</div>
<div class="c b" style="left:1142.5px;width:120.0px;top:777.72px">A</div>
<div class="c n" style="left:28.5px;width:123.0px;top:801.96px">24</div>
<div class="c j" style="left:151.5px;width:145.0px;top:801.96px">金沢有正</div>
<div class="c k" style="left:296.5px;width:151.8px;top:801.96px">カナザワアリマサ</div>
<div class="c j" style="left:448.3px;width:101.0px;top:801.96px">男</div>
<div class="c e" style="left:549.3px;width:280.2px;top:801.96px">arimasa_kanazawa@dxeo.zlxpv.le</div>
<div class="c d" style="left:829.5px;width:93.0px;top:801.96px">1974/1/17</div>
<div class="c n" style="left:922.5px;width:106.3px;top:801.96px">46</div>
<div class="c j" style="left:1028.8px;width:113.7px;top:801.96px">福岡県</div>
<div class="c b" style="left:1142.5px;width:120.0px;top:801.96px">B</div>
<div class="c n" style="left:28.5px;width:123.0px;top:826.20px">25</div>
<div class="c j" style="left:151.5px;width:145.0px;top:826.20px">坂口穂恵</div>
<div class="c k" style="left:296.5px;width:151.8px;top:826.20px">サカグチホエ</div>
<div class="c j" style="left:448.3px;width:101.0px;top:826.20px">女</div>
<div class="c e" style="left:549.3px;width:280.2px;top:826.20px">hoe_sakaguchi@ntuxv.kbb</div>
<div class="c d" style="left:829.5px;width:93.0px;top:826.20px">1993/2/28</div>
<div class="c n" style="left:922.5px;width:106.3px;top:826.20px">27</div>
<div class="c j" style="left:1028.8px;width:113.7px;top:826.20px">愛知県</div>
<div class="c b" style="left:1142.5px;width:120.0px;top:826.20px">A</div>
<div class="gl" style="left:1262.5px;width:45.8px;top:243.94px"></div>
<div class="gl" style="left:1262.5px;width:45.8px;top:268.18px"></div>
<div class="gl" style="left:1262.5px;width:45.8px;top:292.42px"></div>
<div class="gl" style="left:1262.5px;width:45.8px;top:316.66px"></div>
<div class="gl" style="left:1262.5px;width:45.8px;top:340.90px"></div>
<div class="gl" style="left:1262.5px;width:45.8px;top:365.14px"></div>
<div class="gl" style="left:1262.5px;width:45.8px;top:389.38px"></div>
<div class="gl" style="left:1262.5px;width:45.8px;top:413.62px"></div>
<div class="gl" style="left:1262.5px;width:45.8px;top:437.86px"></div>
<div class="gl" style="left:1262.5px;width:45.8px;top:462.10px"></div>
<div class="gl" style="left:1262.5px;width:45.8px;top:486.34px"></div>
<div class="gl" style="left:1262.5px;width:45.8px;top:510.58px"></div>
<div class="gl" style="left:1262.5px;width:45.8px;top:534.82px"></div>
<div class="gl" style="left:1262.5px;width:45.8px;top:559.06px"></div>
<div class="gl" style="left:1262.5px;width:45.8px;top:583.30px"></div>
<div class="gl" style="left:1262.5px;width:45.8px;top:607.54px"></div>
<div class="gl" style="left:1262.5px;width:45.8px;top:631.78px"></div>
<div class="gl" style="left:1262.5px;width:45.8px;top:656.02px"></div>
<div class="gl" style="left:1262.5px;width:45.8px;top:680.26px"></div>
<div class="gl" style="left:1262.5px;width:45.8px;top:704.50px"></div>
<div class="gl" style="left:1262.5px;width:45.8px;top:728.74px"></div>
<div class="gl" style="left:1262.5px;width:45.8px;top:752.98px"></div>
<div class="gl" style="left:1262.5px;width:45.8px;top:777.22px"></div>
<div class="gl" style="left:1262.5px;width:45.8px;top:801.46px"></div>
<div class="gl" style="left:1262.5px;width:45.8px;top:825.70px"></div>
<div class="hl" style="top:243.94px"></div>
<div class="hl" style="top:268.18px"></div>
<div class="hl" style="top:292.42px"></div>
<div class="hl" style="top:316.66px"></div>
<div class="hl" style="top:340.90px"></div>
<div class="hl" style="top:365.14px"></div>
<div class="hl" style="top:389.38px"></div>
<div class="hl" style="top:413.62px"></div>
<div class="hl" style="top:437.86px"></div>
<div class="hl" style="top:462.10px"></div>
<div class="hl" style="top:486.34px"></div>
<div class="hl" style="top:510.58px"></div>
<div class="hl" style="top:534.82px"></div>
<div class="hl" style="top:559.06px"></div>
<div class="hl" style="top:583.30px"></div>
<div class="hl" style="top:607.54px"></div>
<div class="hl" style="top:631.78px"></div>
<div class="hl" style="top:656.02px"></div>
<div class="hl" style="top:680.26px"></div>
<div class="hl" style="top:704.50px"></div>
<div class="hl" style="top:728.74px"></div>
<div class="hl" style="top:752.98px"></div>
<div class="hl" style="top:777.22px"></div>
<div class="hl" style="top:801.46px"></div>
<div class="hl" style="top:825.70px"></div>
<div class="vl" style="left:151.0px"></div>
<div class="vl" style="left:296.0px"></div>
<div class="vl" style="left:447.8px"></div>
<div class="vl" style="left:548.8px"></div>
<div class="vl" style="left:829.0px"></div>
<div class="vl" style="left:922.0px"></div>
<div class="vl" style="left:1028.3px"></div>
<div class="vl" style="left:1142.0px"></div>
<div class="vl" style="left:1262.0px"></div>
<div class="selbox" style="left:150.0px;top:364.14px;width:147.5px;height:26.74px"></div>
<div class="fillh" style="left:293.5px;top:386.88px"></div>
<div class="caret" style="left:179.5px;top:367.14px"></div>
</div>
<div id="tabbar"></div>
<div id="status"></div>
<svg class="abs" style="left:0;top:825px;z-index:6" width="1327" height="54" viewBox="0 825 1327 54" fill="none">
<path d="M32 840.5l-3.6 3.6 3.6 3.6z" fill="#c2c2c2"/><path d="M56 840.5l3.6 3.6-3.6 3.6z" fill="#c2c2c2"/>
<rect x="99" y="831" width="68.500" height="24.300" fill="#fff"/><path d="M98.500 854.600h69.500" stroke="#256a46" stroke-width="1.800"/>
<path d="M98.500 832v22.500" stroke="#c6c6c6" stroke-width="1"/><path d="M168 832v22.500" stroke="#a8a8a8" stroke-width="1"/>
<circle cx="208.300" cy="844.900" r="7.200" stroke="#7d7d7d" stroke-width="1.100"/><path d="M204.500 844.900h7.600M208.300 841.100v7.600" stroke="#6f6f6f" stroke-width="1.400"/>
<circle cx="798.5" cy="840" r="0.8" fill="#999"/><circle cx="798.5" cy="844" r="0.8" fill="#999"/><circle cx="798.5" cy="848" r="0.8" fill="#999"/>
<rect x="815.5" y="836.5" width="493" height="15.5" fill="#e4e4e4" stroke="#c6c6c6"/>
<rect x="830" y="837.5" width="411.5" height="13.5" fill="#fff" stroke="#c6c6c6"/>
<path d="M824 840.5l-3.6 3.6 3.6 3.6z" fill="#555"/><path d="M1299.5 840.5l3.6 3.6-3.6 3.6z" fill="#555"/>
<rect x="1293" y="837" width="15" height="14.5" fill="#fff" stroke="#c6c6c6"/><path d="M1299 840.5l3.6 3.6-3.6 3.6z" fill="#555"/>
<rect x="816" y="837" width="14" height="14.5" fill="#fff" stroke="#c6c6c6"/><path d="M824.5 840.5l-3.6 3.6 3.6 3.6z" fill="#555"/>
<g stroke="#777" stroke-width="1"><rect x="1041.500" y="863.5" width="12" height="11"/><path d="M1041.500 867h12M1041.500 871h12M1045.500 863.500v11M1049.500 863.500v11"/></g>
<g stroke="#777" stroke-width="1"><rect x="1079.500" y="863.500" width="11" height="11"/><rect x="1082" y="866" width="6" height="6.500"/><path d="M1083.500 868h3M1083.500 870h3"/></g>
<g stroke="#777" stroke-width="1"><rect x="1116.500" y="863.500" width="12" height="11"/><path d="M1120.500 863.500v6h4v-6M1116.500 869.500h12"/></g>
<path d="M1155 869.500h94" stroke="#a8a8a8" stroke-width="1"/><path d="M1203.500 866v7" stroke="#a8a8a8" stroke-width="1"/>
<path d="M1145.500 869.500h5" stroke="#8a8a8a" stroke-width="1.300"/><path d="M1254 869.500h7M1257.500 866v7" stroke="#8a8a8a" stroke-width="1.300"/>
</svg>

<svg class="abs" style="left:1308px;top:196px;z-index:6" width="19" height="636" viewBox="1308 196 19 636" fill="none">
<rect x="1311.2" y="508" width="14.6" height="311" fill="#dedede"/>
<rect x="1311.7" y="199" width="13.8" height="14" fill="#fff" stroke="#bdbdbd"/>
<path d="M1315.2 207.500l3.500-4 3.500 4z" fill="#666"/>
<rect x="1311.7" y="213" width="13.8" height="295.500" fill="#fff" stroke="#bdbdbd"/>
<rect x="1311.700" y="818.500" width="13.800" height="13.200" fill="#fff" stroke="#bdbdbd"/>
<path d="M1315.200 823.200l3.500 4 3.500-4z" fill="#666"/>
</svg>

<div class="rt" style="left:111.8px;top:837px;font-size:12.7px;line-height:16px;transform:scaleX(1.054);color:#3d7458;">Sheet1</div>
<div class="rt" style="left:8px;top:861px;font-size:11.5px;line-height:16px;transform:scaleX(1.000);">編集</div>
<div class="rt" style="left:1279px;top:861px;font-size:12px;line-height:16px;transform:scaleX(1.042);color:#a3a3a3;">100%</div>
<div class="wm" style="left:54.8px;top:202.6px;transform:scaleX(0.961)">192.168.215.63</div>
<div class="wm" style="left:54.8px;top:221.2px;transform:scaleX(0.935)">kkauser1@yu121.ashisuto.local</div>
<div class="wm" style="left:55.7px;top:239.5px;transform:scaleX(1.011)">2020/10/23 15:52</div>
<div class="wm" style="left:55.8px;top:259.2px;transform:scaleX(0.905)">写真撮影などはご遠慮ください。</div>
<div class="wm" style="left:985.4px;top:202.6px;transform:scaleX(0.961)">192.168.215.63</div>
<div class="wm" style="left:985.4px;top:221.2px;transform:scaleX(0.935)">kkauser1@yu121.ashisuto.local</div>
<div class="wm" style="left:986.3px;top:239.5px;transform:scaleX(1.011)">2020/10/23 15:52</div>
<div class="wm" style="left:986.4px;top:259.2px;transform:scaleX(0.905)">写真撮影などはご遠慮ください。</div>
<div class="wm" style="left:520.1px;top:464.4px;transform:scaleX(0.961)">192.168.215.63</div>
<div class="wm" style="left:520.1px;top:483.0px;transform:scaleX(0.935)">kkauser1@yu121.ashisuto.local</div>
<div class="wm" style="left:521.0px;top:501.3px;transform:scaleX(1.011)">2020/10/23 15:52</div>
<div class="wm" style="left:521.1px;top:521.0px;transform:scaleX(0.905)">写真撮影などはご遠慮ください。</div>
<div class="wm" style="left:54.8px;top:727.0px;transform:scaleX(0.961)">192.168.215.63</div>
<div class="wm" style="left:54.8px;top:745.6px;transform:scaleX(0.935)">kkauser1@yu121.ashisuto.local</div>
<div class="wm" style="left:55.7px;top:763.9px;transform:scaleX(1.011)">2020/10/23 15:52</div>
<div class="wm" style="left:55.8px;top:783.6px;transform:scaleX(0.905)">写真撮影などはご遠慮ください。</div>
<div class="wm" style="left:985.4px;top:727.0px;transform:scaleX(0.961)">192.168.215.63</div>
<div class="wm" style="left:985.4px;top:745.6px;transform:scaleX(0.935)">kkauser1@yu121.ashisuto.local</div>
<div class="wm" style="left:986.3px;top:763.9px;transform:scaleX(1.011)">2020/10/23 15:52</div>
<div class="wm" style="left:986.4px;top:783.6px;transform:scaleX(0.905)">写真撮影などはご遠慮ください。</div>
<div id="edge"></div>
</div>
</body>
</html>
